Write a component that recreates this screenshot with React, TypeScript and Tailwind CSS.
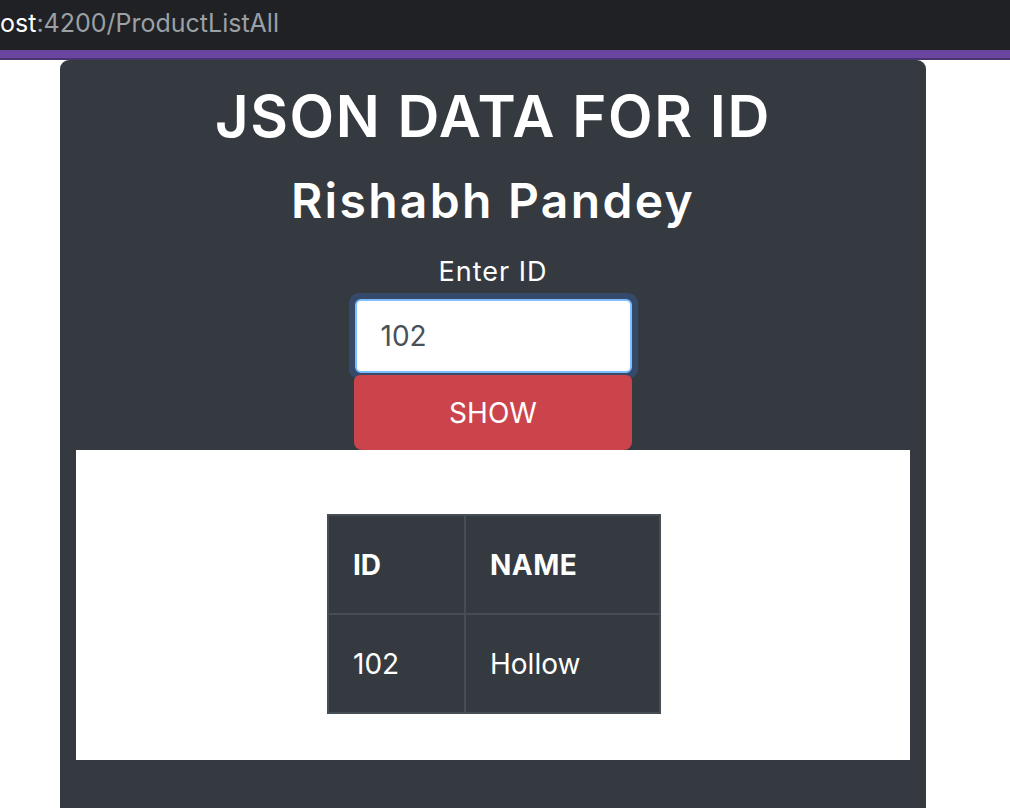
import React from 'react';

const rows = [{ id: 102, name: 'Hollow' }];

export default function App() {
  return (
    <div className="w-[1010px] h-[808px] overflow-hidden bg-white font-['Inter',sans-serif]">
      {/* browser address bar */}
      <div className="h-[50px] bg-[#202124] flex items-center overflow-hidden">
        <span className="text-[25px] leading-none pb-[4px] text-[#9aa0a6]">
          <span className="text-white">ost</span>:4200/ProductListAll
        </span>
      </div>
      <div className="h-[8px] bg-[#6a46a0]" />
      <div className="h-[2px] bg-[#4a3470]" />

      <div className="px-[60px] mr-[24px]">
        <div className="bg-[#343a40] rounded-t-[9px] h-[760px] px-[16px] flex flex-col">
          <h1 className="text-white text-[58px] font-semibold text-center leading-none mt-[27px] tracking-[1.6px]">
            JSON DATA FOR ID
          </h1>
          <h2 className="text-white text-[48px] font-semibold text-center leading-none mt-[32px] tracking-[2.3px]">
            Rishabh Pandey
          </h2>
          <div className="flex flex-col items-center mt-[33px]">
            <label className="text-white text-[27px] leading-none tracking-[1px]">Enter ID</label>
            <div className="mt-[8px] rounded-[10px] p-[6px] bg-[#354a6b]">
              <div className="w-[277px] h-[74px] bg-white border-2 border-[#80bdff] rounded-[6px] flex items-center px-[24px]">
                <span className="text-[28px] text-[#495057]">102</span>
              </div>
            </div>
            <button className="-mt-[4px] w-[278px] h-[75px] bg-[#cb444c] rounded-b-[8px] rounded-t-[6px] text-white text-[28px] uppercase">
              Show
            </button>
          </div>
          <div className="bg-white h-[310px] flex justify-center pt-[64px] pl-[2px]">
            <table className="border-collapse bg-[#343a40] text-white text-[28px] h-fit">
              <thead>
                <tr>
                  <th className="border-2 border-[#454d55] w-[137px] h-[99px] text-left pl-[24px] font-bold">ID</th>
                  <th className="border-2 border-[#454d55] w-[195px] h-[99px] text-left pl-[24px] font-bold tracking-[0.5px]">NAME</th>
                </tr>
              </thead>
              <tbody>
                {rows.map(r => (
                  <tr key={r.id}>
                    <td className="border-2 border-[#454d55] h-[99px] pl-[24px]">{r.id}</td>
                    <td className="border-2 border-[#454d55] h-[99px] pl-[24px]">{r.name}</td>
                  </tr>
                ))}
              </tbody>
            </table>
          </div>
        </div>
      </div>
    </div>
  );
}
